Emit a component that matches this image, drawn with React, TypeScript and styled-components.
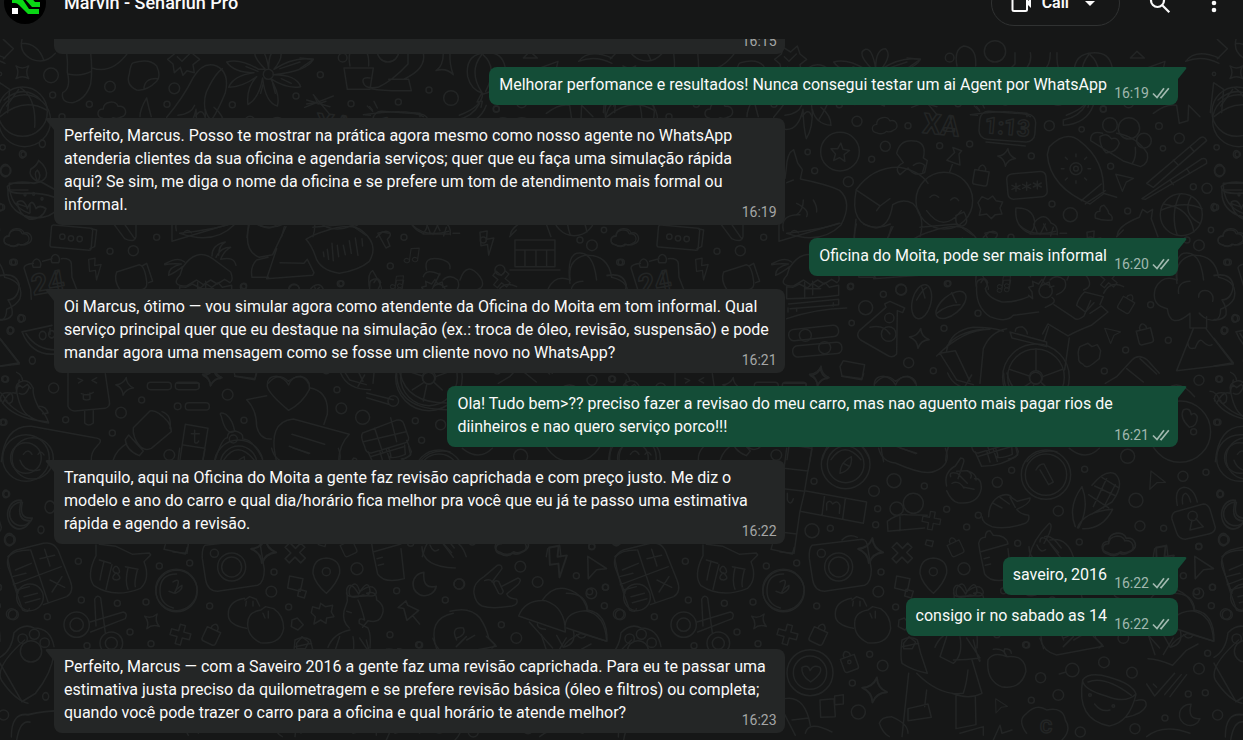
import React from "react";
import styled, { createGlobalStyle } from "styled-components";

const GlobalStyle = createGlobalStyle`
  * { box-sizing: border-box; }
  body {
    margin: 0;
    background: #161717;
    color: #fafafa;
    font-family: Roboto, "Liberation Sans", sans-serif;
  }
`;

const Page = styled.div`
  position: relative;
  display: flex;
  flex-direction: column;
  height: 100vh;
  overflow: hidden;
  isolation: isolate;
`;

const Wallpaper = styled.svg`
  position: absolute;
  inset: 0;
  z-index: -1;
  width: 100%;
  height: 100%;
  fill: none;
  stroke: #232525;
  stroke-width: 4.5;
  stroke-linecap: round;
  stroke-linejoin: round;

  text {
    font-family: Roboto, "Liberation Sans", sans-serif;
    font-weight: 700;
  }
`;

const HeaderClip = styled.header`
  display: flex;
  flex: none;
  align-items: flex-end;
  height: 39px;
  overflow: hidden;
  background: #161717;
`;

const HeaderBar = styled.div`
  display: flex;
  flex: 1;
  align-items: center;
  height: 72px;
  padding: 0 6px 0 4px;
`;

const Avatar = styled.svg`
  width: 42px;
  height: 42px;
  border-radius: 50%;
  background: #000;
`;

const Title = styled.h1`
  flex: 1;
  margin: 0 0 0 18px;
  font-size: 18px;
  line-height: 24px;
  font-weight: 500;
`;

const CallButton = styled.button`
  display: flex;
  align-items: center;
  height: 46px;
  margin-right: 17px;
  padding: 0 20px 0 18px;
  border: 1px solid #303232;
  border-radius: 23px;
  background: transparent;
  color: #fafafa;
  font: 600 16px/24px Roboto, "Liberation Sans", sans-serif;

  svg:last-child { margin-left: 12px; }
  svg:first-child { margin-right: 8px; }
`;

const IconButton = styled.button`
  display: flex;
  align-items: center;
  justify-content: center;
  width: 46px;
  height: 46px;
  padding: 0;
  border: 0;
  border-radius: 50%;
  background: transparent;
  color: #fafafa;

  & + & { margin-left: 8px; }
`;

const Conversation = styled.main`
  display: flex;
  flex: 1;
  flex-direction: column;
  justify-content: flex-end;
  min-height: 0;
  overflow: hidden;
  padding: 0 65px 7px 54px;
`;

const Bubble = styled.article<{ $out?: boolean; $tail?: boolean; $joined?: boolean; $wide?: boolean }>`
  position: relative;
  flex: none;
  align-self: ${(p) => (p.$out ? "flex-end" : "flex-start")};
  width: ${(p) => (p.$wide ? "65%" : "auto")};
  min-height: 38px;
  max-width: 65%;
  margin-top: ${(p) => (p.$joined ? 3 : 13)}px;
  padding: 6px ${(p) => (p.$out ? 10 : 14)}px 9px 10px;
  border-radius: 8px;
  border-top-left-radius: ${(p) => (p.$tail && !p.$out ? 0 : 8)}px;
  border-top-right-radius: ${(p) => (p.$tail && p.$out ? 0 : 8)}px;
  background: ${(p) => (p.$out ? "#144d37" : "#242626")};
`;

const Tail = styled.svg<{ $out?: boolean }>`
  position: absolute;
  top: 0;
  ${(p) => (p.$out ? "left: 100%;" : "right: 100%; transform: scaleX(-1);")}
  width: 9px;
  height: 12px;
  fill: ${(p) => (p.$out ? "#144d37" : "#242626")};
`;

const Text = styled.p`
  margin: 0;
  font-size: 16px;
  line-height: 23px;
`;

const StampSpace = styled.span<{ $out?: boolean }>`
  display: inline-block;
  width: ${(p) => (p.$out ? 61 : 40)}px;
`;

const Stamp = styled.footer<{ $out?: boolean }>`
  position: absolute;
  right: 8px;
  bottom: ${(p) => (p.$out ? 4 : 5)}px;
  display: flex;
  align-items: center;
  gap: 3px;
  color: ${(p) => (p.$out ? "#a1b8af" : "#a5a6a6")};
  font-size: 14px;
  line-height: 16px;
`;

type Message = { text?: string; time: string; out?: boolean; joined?: boolean; tail?: boolean };

const messages: Message[] = [
  { time: "16:15" },
  { out: true, tail: true, time: "16:19", text: "Melhorar perfomance e resultados! Nunca consegui testar um ai Agent por WhatsApp" },
  { tail: true, time: "16:19", text: "Perfeito, Marcus. Posso te mostrar na prática agora mesmo como nosso agente no WhatsApp atenderia clientes da sua oficina e agendaria serviços; quer que eu faça uma simulação rápida aqui? Se sim, me diga o nome da oficina e se prefere um tom de atendimento mais formal ou informal." },
  { out: true, tail: true, time: "16:20", text: "Oficina do Moita, pode ser mais informal" },
  { tail: true, time: "16:21", text: "Oi Marcus, ótimo — vou simular agora como atendente da Oficina do Moita em tom informal. Qual serviço principal quer que eu destaque na simulação (ex.: troca de óleo, revisão, suspensão) e pode mandar agora uma mensagem como se fosse um cliente novo no WhatsApp?" },
  { out: true, tail: true, time: "16:21", text: "Ola! Tudo bem>?? preciso fazer a revisao do meu carro, mas nao aguento mais pagar rios de diinheiros e nao quero serviço porco!!!" },
  { tail: true, time: "16:22", text: "Tranquilo, aqui na Oficina do Moita a gente faz revisão caprichada e com preço justo. Me diz o modelo e ano do carro e qual dia/horário fica melhor pra você que eu já te passo uma estimativa rápida e agendo a revisão." },
  { out: true, tail: true, time: "16:22", text: "saveiro, 2016" },
  { out: true, joined: true, time: "16:22", text: "consigo ir no sabado as 14" },
  { tail: true, time: "16:23", text: "Perfeito, Marcus — com a Saveiro 2016 a gente faz uma revisão caprichada. Para eu te passar uma estimativa justa preciso da quilometragem e se prefere revisão básica (óleo e filtros) ou completa; quando você pode trazer o carro para a oficina e qual horário te atende melhor?" },
];

const Ticks = () => (
  <svg width="18" height="14" viewBox="0 0 18 14" fill="none" stroke="currentColor" strokeWidth="1.7" aria-label="Delivered">
    <path d="M1 7.5l4 4L12 2.2M8.3 10.8l.9.8L16.8 2.2" />
  </svg>
);

/* ---- wallpaper doodles ---- */

type Dot = [number, number, number];

const Dots = ({ at }: { at: Dot[] }) => (
  <>
    {at.map(([x, y, r]) => (
      <circle key={`${x}-${y}-${r}`} cx={x} cy={y} r={r} />
    ))}
  </>
);

const Shapes = ({ at }: { at: string[] }) => (
  <>
    {at.map((d) => (
      <path key={d} d={d} />
    ))}
  </>
);

const Placed = ({ shape, at }: { shape: string; at: [number, number, number, number][] }) => (
  <>
    {at.map(([x, y, turn, size]) => (
      <path key={`${x}-${y}`} d={shape} transform={`translate(${x} ${y}) rotate(${turn}) scale(${size})`} />
    ))}
  </>
);

const SPARKLE = "M0-27Q5-5 27 0Q5 5 0 27Q-5 5-27 0Q-5-5 0-27z";
const STAR = "M0-28l8 18 20 2-15 14 4 20-17-10-17 10 4-20-15-14 20-2z";
const CLOUD = "M-32 20c-20-4-18-28 2-28 0-24 38-28 44-8 24-4 32 26 10 32-10 6-20 4-24 2-8 8-22 8-32 2z";
const ARROW = "M-26-24l56 24-26 8-18 28z";
const CROSS = "M-8-30h16v20h22v18h-22v22h-16v-22h-22v-18h22z";
const BAG = "M-22-12h44v36q0 8-8 8h-28q-8 0-8-8zM-10-12v-8q10-18 20 0v8";
const BOLT = "M-14-36h22l-6 24h22l-24 48 2-32h-20z";
const NOTE = "M-12 22v-48l30-6v46M-12 22a10 8 0 1 1-4-8M18 14a10 8 0 1 1-4-8";
const MOON = "M-4-30a32 32 0 1 0 34 38q-38 10-34-38z";
const PIN = "M-16-34h28l-4 12 14 30h-42l14-30zM0 8v30";

const Tile = () => (
  <g id="doodles">
    <g transform="scale(.3333)">
      <Dots at={[[153, 226, 22], [158, 285, 9], [268, 313, 9], [330, 260, 16], [523, 265, 16], [501, 313, 9], [697, 314, 9], [888, 288, 9], [805, 223, 15], [186, 350, 9], [0, 222, 5]]} />
      <Placed shape={SPARKLE} at={[[67, 217, 45, 1], [0, 0, 0, 1]]} />
      <Placed shape={CLOUD} at={[[340, 335, 0, 1]]} />
      <Shapes
        at={[
          "M10 118l30 28-30 30M66 118q-10 40 30 60 40 16 70-18M66 130q48 0 66 52M200 158q4 30 2 58 12 50-14 62-6 30 30 30 40-10 54-56 6-40 0-94M204 222q40 8 70-8M276 204q60 20 108-46",
          "M400 188q50-14 70 10 14 30 0 46-30 30-60 26-34-16-22-48 4-32 12-34zM432 268q0-34 40-32",
          "M503 178l20-16 6-20 22 14 20-18 8 24 20 16-20 16 4 24-22-6-12 14-8-24-18 16-4-26zM532 170l14 14 22-22",
          "M500 352q50-60 80-120 30-50 70-34 40 20 26 80-20 50-40 80M615 330q-6-40 12-70 20-40 40-54M585 350q20-30 30 0",
          "M420 350q0-22 20-56 6 30 14 56",
          "M796 208q-50-50-20-60 20-4 30 58 0-60 30-60 20 20-14 62 60-40 118-30-20 36-120 46 70 0 82 36-40 8-90-24 30 50 20 82-36-10-44-84-10 60-44 80-6-50 26-84-40 30-84 32 14-36 76-44-60 0-82-32 40-12 96 22zM840 206l60-20M844 236l30 14M818 250l8 30M790 250l-8 30M774 214l-36-14",
          "M944 290l10 22 24-8M920 300l70 20",
        ]}
      />
      <circle cx="68" cy="335" r="74" />
      <path d="M12 300q60-50 110 0M0 350q70-60 140-20M60 262q50 30 44 120M20 318l36-50" />
    </g>

    <g transform="translate(300 36) scale(.3333)">
      <Dots at={[[61, 116, 9], [153, 203, 9], [295, 198, 9], [387, 162, 9], [453, 186, 22], [589, 218, 9], [665, 200, 15], [128, 65, 13], [264, 46, 32]]} />
      <Shapes
        at={[
          "M0 66l40 4-40 28M132 96h88l-10 64h-68zM150 90q-10-50 20-60 40 4 36 60M210 126q-26-4-20 14 6 20 44 14 44-20 90-70V50M214 158q40 8 120 6l-8-34h-60M370 50q10 50-60 80",
          "M430 50q0 40-22 54 30-10 52 12-12-30-10-66",
          "M545 52q-50 10-42 70 10 40 45 50 0 40-70 66M545 52q60-10 70 40 10 60-64 82M545 56q-40 50 0 112M549 56q46 40 8 110M545 172l-14 26 16-2-4 18",
          "M14 214l86-34M40 176l50 60M20 204l34-6M190 236q140-20 180 6M202 210l16 16M222 196l10 20M670 66l20-20 22 20z",
          "M720 96l54-20-14 60zM740 200q20-60 60-90M836 76q30-40 100-10M836 76q50-20 100 6",
          "M910 230l10-90 30 20-6 70",
        ]}
      />
    </g>

    <g transform="translate(173 100) scale(.3333)">
      <Dots
        at={[
          [231, 64, 15], [384, 77, 9], [316, 139, 15], [275, 178, 9], [83, 156, 8], [104, 212, 9], [205, 245, 15], [180, 155, 58],
          [808, 77, 15], [905, 88, 8], [970, 28, 9], [1137, 78, 10], [1198, 115, 15], [1149, 145, 8], [1310, 142, 8], [1373, 163, 8],
          [1320, 212, 15], [1240, 260, 9], [1281, 265, 15], [1307, 322, 9], [1293, 390, 8], [754, 168, 9], [569, 132, 9], [479, 137, 9],
          [816, 312, 9], [871, 344, 21], [1043, 333, 9], [992, 199, 9], [990, 75, 22], [1047, 85, 32], [1092, 122, 22], [493, 302, 85],
          [1204, 344, 63], [213, 558, 8], [310, 583, 9], [364, 570, 16], [257, 623, 21], [215, 669, 8], [76, 706, 18], [134, 743, 18],
          [505, 550, 8], [594, 640, 9], [492, 685, 9], [386, 788, 15], [460, 812, 9], [1257, 436, 16], [1345, 487, 9], [1112, 614, 9],
          [1165, 721, 9], [1335, 691, 9], [1368, 655, 10], [1037, 750, 9], [973, 813, 9], [1257, 841, 15], [1319, 838, 9],
          [768, 832, 100], [768, 832, 85], [768, 832, 20], [797, 573, 20], [326, 702, 22], [328, 654, 14], [888, 206, 18], [888, 206, 7],
          [1376, 62, 78],
        ]}
      />
      <Placed shape={STAR} at={[[180, 157, 5, 1]]} />
      <Placed shape={SPARKLE} at={[[680, 172, 8, 1], [418, 715, 8, 1.1], [118, 828, 10, 1.1]]} />
      <Placed shape={CLOUD} at={[[318, 78, -5, 0.9], [1360, 415, 0, 1]]} />
      <Placed shape={BAG} at={[[604, 224, 10, 1], [1042, 608, 30, 0.9], [1093, 700, -14, 1]]} />
      <Placed shape={ARROW} at={[[1034, 240, -10, 0.9], [998, 700, -10, 0.8]]} />
      <Placed shape={PIN} at={[[522, 180, 20, 1]]} />
      <Placed shape={NOTE} at={[[676, 548, 8, 0.7]]} />
      <Placed shape={CROSS} at={[[985, 538, 40, 0.9]]} />
      <text x="612" y="98" fontSize="68" transform="rotate(5 612 98)">1:13</text>
      <text x="426" y="98" fontSize="84" transform="rotate(6 426 98)">XA</text>
      <rect x="598" y="38" width="168" height="84" rx="26" transform="rotate(4 682 80)" />
      <rect x="682" y="218" width="118" height="76" rx="16" transform="rotate(-5 740 256)" />
      <rect x="26" y="682" width="150" height="34" rx="15" transform="rotate(-6 100 700)" />
      <rect x="38" y="732" width="148" height="34" rx="15" transform="rotate(-5 112 750)" />
      <ellipse cx="425" cy="605" rx="28" ry="52" transform="rotate(14 425 605)" />
      <ellipse cx="513" cy="615" rx="28" ry="54" transform="rotate(50 513 615)" />
      <Shapes
        at={[
          "M708 250v24M696 256l24 12M696 268l24-12M740 247v24M728 253l24 12M728 265l24-12M772 243v24M760 249l24 12M760 261l24-12",
          "M618 126l118 12M715 38l26 2v10M590 20l8 10M576 44l16 2",
          "M15 88q40 4 54-60 2 60 10 88 20-30 18-88 10 44 56 48 0-30-30-54M15 46q40-4 50-30",
          "M15 235l4-30q2-46 22-56l12 40 14 20-6 28q80 16 118 34 40 36 4 104-60 60-160 26M40 240l-20 8M20 400q100-10 160-30M50 310q40 20 30 40M100 300q12 20 10 36M10 392q-10-50 50-48M70 300q0 30-20 44",
          "M350 160q10-46 60-36 30 8 20 50l12 8-8 36q-30 14-50-14l-24 20q-20-20 10-36zM400 196q20-14 34 0l-6 20",
          "M228 270q50-70 130-68 60 10 86 48M228 270l72 48 30-22M228 274q-20 100 60 110 40-4 50-70 30-20 60-4 40 40 22 100M300 318l-10 14M222 412l6-54M326 410l8-30M420 382l110-10 50 34",
          "M450 292q12-14 26 0M512 300q14-14 24 2M440 332q50 70 104 0M528 346q-4 36 20 32 22-8 4-42z",
          "M606 290l18 8 14-10 10 14 20 4-8 18 6 18-20 2-12 12-14-14-22 4 4-18-8-20z",
          "M708 324q50-2 56 40 0 24-14 36-48-20-42-76zM764 366q30-34 50 4 20 4 18 34M780 404l16-32M812 408l8-26M750 402h80",
          "M808 140q50-50 90-18 80 60 72 160l-40 30q-120-50-128-148zM904 302l60-50M916 312l60-40M970 280l40 12M888 170v-8M888 250v-8M852 206h-8M932 206h-8M862 178l-6-6M914 178l6-6M862 234l-6 6M914 234l6 6",
          "M850 60q50-10 70-50M850 76q70-4 90-60M850 60v16",
          "M960 110q20-14 34 6 20-6 24 14-10 30-40 28-20-20-18-48zM932 120q0-30 36-20M932 122l100 62M1010 100q60 10 92 60 6 30-20 40l-50-16M1066 142q4 30-10 50",
          "M1120 40q40-30 70-24l8 54 26-8 2-46 34 34",
          "M1100 250l160-136q14-8 20 8l-160 140zM1086 296l180-120q16-4 14 14L1096 298zM1180 180l14 14M1230 140l12 14M1170 240l10 14M1220 206l10 14",
          "M1144 330q70-30 122-4M1200 282q-30 60-8 124M1150 312q80 10 92 84M1234 290q-30 50 26 80",
          "M1330 250h60M1330 250q0 70 60 90M1350 310l30 10M1326 270h60",
          "M946 354q-4-20 14-20-2-16 12-18 14 16 14 24 14 8 10 20-26 4-50-6z",
          "M1012 408q0-30 66-56l10-24 14 10 16-10-4 28 20 54M1030 390l-20 20",
          "M20 560v36q80 0 156-10v-30l-28 6-12-14-20 14-18-12-16 14-24-12-20 10zM74 546v44M98 544v40M76 566h46M26 612l150-14v16l-146 12M24 636v-12M50 634v-10M160 618v-10M20 656q90-30 180-32",
          "M330 604l44 20-6 14-16-6-2 130q-10 12-24 6l-84-48q-16-12-4-28l80-70-4-10zM270 682q40-10 60 20",
          "M410 600q16-30 30-38M425 560l10 34M470 640q30-26 70-26M515 578l14 30",
          "M590 560q-4 60 40 90 50 20 70-4l76-10M590 560q-4-24 24-24 16 10 2 30 4 26 50 40 40 2 80-16M746 586l12 10-2-20-10-14 14-4-2-14 18 8 10-14 8 14 14-6 2 16 12-4M816 592q14 10 0 20l-20 10M810 540q20-20 44 0 12 30-24 44M822 614l60 40q10 10 30-6l20-46",
          "M914 576l56 14-10 24M914 576q-20 20-24 40l26 20 26-28M930 640l34-22 20 18-50 40q-50 20-70 32l-60-36-16 30",
          "M500 752q10-60 80-70 60 0 90 12M470 768q80-80 160-80M480 760l50 80 50 14M480 760l46-8 44 92M600 850l10-104q20-50 70-60M690 696l110 30v14l-104-26zM706 694q0-14 20-14 16 10 16 22M868 714l-14 96M806 680l-14 44M500 740q30-44 110-52",
          "M768 812v-66M788 830l60-22M784 848l24 22M752 848l-34 22M748 828l-60-20",
          "M900 740l24-10 12 10 16-6 10 18-4 24-20 16q-20 16-30 0-14-6-12-20-4-18 4-32z",
          "M1010 830l46-50q20-20 46 0l36 40M1040 806l50 40M1080 776l50 46M976 850l34-20",
          "M1230 640q-60 50-68-14-50-10-36-60 20-44 66-26-10-60 44-74 70-4 80 66 60 14 46 64-10 20-40 32 0 50-50 24-20-16-12-12M1230 640v44h50v-34M1196 580q-6-34 34-36M1256 592q0-24 26-20 22 10 16 32M1240 686l-50 126 170-20-82-106M1224 730q0 20 22 14 12-34 24-18 18 16 26 8",
          "M180 800l10-18 64 12-8 42-60-8zM286 850q30-36 60-6 40-30 60 6M12 850h66v10",
          "M840 400h20M610 412l18-16 20 4",
        ]}
      />
    </g>

    <g transform="translate(0 220) scale(.3333)">
      <Dots at={[[38, 127, 9], [330, 94, 9], [400, 92, 15], [470, 52, 9], [1212, 52, 9], [1171, 138, 9], [1021, 191, 9], [187, 50, 8], [213, 55, 8], [239, 57, 8], [730, 200, 9], [882, 208, 16], [1450, 60, 9], [1500, 150, 15], [1740, 60, 9]]} />
      <Placed shape={CLOUD} at={[[54, 56, 0, 0.9]]} />
      <Placed shape={BOLT} at={[[284, 148, -10, 0.9], [1460, 70, -10, 1]]} />
      <Placed shape={NOTE} at={[[1240, 108, 8, 0.8], [1195, 200, 10, 0.7]]} />
      <rect x="152" y="20" width="124" height="66" rx="6" transform="rotate(5 214 53)" />
      <text x="100" y="226" fontSize="86" transform="rotate(-10 100 226)">24</text>
      <Shapes
        at={[
          "M274 26l16 4-6 50-14 6M340 10l34 46q30 14 34-6V10M372 10l32 46",
          "M72 144q0-10 28-14M128 124l28-8M184 116q30-2 30 16l2 40 14 36M72 144l20 64 2 30M100 142a12 16 0 1 1 20 0zM156 128a12 16 0 1 1 20 0z",
          "M350 156l68-22q16 2 22 50 4 24-20 26h-60q-20-30-10-54zM426 138l14-8 18 54-12 4",
          "M516 10v54l180-54M550 40q10-16 24-2",
          "M548 142q40-60 90-26l54 40q10 26-2 32l-16-10-22 14-20-12-22 14-20-14-30 18q-50 0-20-32zM494 132q40-24 60-6M494 134q20-4 50-2-40 10-38 34 16-6 42-26M636 108q0-34 40-42-20 10-20 40M648 112q14-30 44-30-20 10-30 36 40-10 46 18",
          "M748 12q-20 80 30 100l40-8 40-84M840 128l72 2 10-12 20 40-4 8-138 10 30-90M804 112l-34 8q-20 20-14 52h50M770 12q40 20 80 0",
          "M946 108q-10-30-28-50 20-14 60-26 80-26 110 2 50 40 20 90-30 26-90 36-60-10-72-52zM970 96l2 14M982 88l4 30M996 70l4 52M1012 76l4 34M1030 76l6 28M1048 62l6 38M1066 54l8 52M1086 56l2 22",
          "M1134 40l24 44 12-6-8-20q20-20-4-24z",
          "M1108 200q-6-40 10-48 30 50 26 56M1122 188q10-20 20 0",
          "M1280 150q-10-40 34-34 40 6 36 30M1270 170q10-26 50-6M1300 200l20-40",
          "M1236 14q40 40 110 20M1280 12l10 24M1310 12l10 20",
          "M1545 60h120v80h-120zM1545 90h120M1575 90v48M1608 90v48M1640 90v48M1530 150h150M1710 190q-10-80 20-90 50-10 60 80",
          "M1380 180q20-60 60-10 20 30-10 40M1490 220q20-40 60-20",
        ]}
      />
    </g>

    <g transform="translate(0 365) scale(.3333)">
      <Dots at={[[14, 42, 9], [161, 69, 15], [197, 164, 9], [337, 204, 9], [425, 105, 9], [363, 143, 16], [533, 124, 10], [683, 89, 16], [732, 166, 9], [508, 270, 16], [1011, 74, 9], [1024, 130, 16], [1088, 157, 21], [1246, 167, 9], [1322, 179, 15], [1265, 226, 9], [700, 222, 12], [1286, 40, 18], [1180, 108, 16], [8, 172, 9], [98, 280, 62], [1480, 90, 15], [1560, 160, 9], [1700, 80, 15], [1760, 200, 9]]} />
      <Placed shape={SPARKLE} at={[[374, 64, 10, 1], [636, 36, 10, 1]]} />
      <rect x="442" y="52" width="72" height="22" rx="10" />
      <rect x="526" y="52" width="72" height="22" rx="10" />
      <rect x="556" y="113" width="72" height="22" rx="10" />
      <Shapes
        at={[
          "M50 22q16 6 18 26-20 6-20 20 10 70 40 86 24 16 58 20-10-30-30-46-20-40-16-58-12-26-32-22M50 70l8-10 10 8 14-10 10 12M2 108q-4-30 30-24 10 8 4 26-14 12-16-4M0 100q30 60 140 70M118 124q20 0 26 20l-16 2",
          "M204 24v100q6 14 20 14l92-8q16-6 12-22l-12-82M234 40l14 6-12 8M290 38l-14 8 14 8M244 86q18 8 36-4M250 88v14q10 6 20 0V84M254 138v36q12 12 26 0v-40",
          "M704 34l60 10 6-18",
          "M866 136q-60-50-64-72-2-30 28-30 24 4 36 26 10-26 36-26 30 6 26 40-20 40-62 62zM800 92l-60 12q30 30 30 80 10 40 44 38M928 68q60 10 54 80l-10 30M830 290q-30-120 50-128l168 46q-30 30-32 80M876 208l98 30M868 244l58 22",
          "M400 188l50-50q20-6 54 32 10 16 10 30l-60 50q-30 14-50-32-6-16-4-30zM486 140q30 10 24 50M376 224l10-14 44 48-12 14q-40-16-42-48zM340 284q10-30 40-48",
          "M540 284l16-106 68 12-16 100M550 240l64 10M584 196v36q8 6 12-4M574 206h24",
          "M664 154q-10-16 14-6 20 16 26 50-26 16-40-44zM646 284q20-66 36-66 0-20 24-20 26 6 22 24 30 0 60 60M672 284q40-60 90 0",
          "M4 290q10-110 90-106l190 34q30 4 8 24-20 20-18 44M70 268q14-20 26 0M114 268q10-14 18 2M60 286q14 40 60 28",
          "M1088 204l100-38q20-4 24 12l14 40q0 12-12 16l-100 30q-16 2-20-20-14-30-6-40zM1124 190l24 72M1090 230l128-30M1172 158l18 72M1166 250q14 40 0 24 10 10 50-6l-2-28M1220 226l14 34q-2 20-30 22",
          "M1100 84l80 20M1100 98l66 20M1022 24q20 50 90 50M1094 30l-20 34M1190 24q0 110 150 110M1200 24q20 90 140 90M1270 108l10-48",
          "M1260 290q30-40 90-30M1400 180q60-70 120-20l-20 60-80 20zM1620 120l60 30-20 60-60-20z",
        ]}
      />
    </g>

    <g transform="translate(173 380) scale(.3333)">
      <Dots
        at={[
          [197, 253, 73], [197, 253, 55], [102, 304, 9], [282, 333, 16], [342, 302, 21], [433, 318, 9], [293, 386, 9], [287, 434, 9],
          [96, 452, 21], [151, 445, 9], [350, 386, 20], [400, 370, 30], [500, 388, 9], [595, 406, 9], [560, 441, 9], [652, 307, 15],
          [695, 271, 9], [798, 284, 74], [798, 284, 62], [914, 268, 9], [1043, 229, 21], [835, 393, 15], [1068, 361, 21], [1080, 438, 15],
          [1151, 445, 9], [1209, 289, 15], [1278, 277, 9], [1322, 342, 9], [1314, 127, 9], [1333, 479, 15], [1257, 499, 9], [713, 490, 9],
          [898, 486, 9], [176, 561, 42], [176, 561, 30], [124, 520, 12], [460, 575, 12], [303, 576, 9], [295, 635, 16], [552, 566, 18],
          [50, 549, 9], [110, 678, 9], [347, 681, 9], [90, 878, 69], [90, 878, 50], [269, 823, 9], [308, 857, 16], [217, 909, 9],
          [235, 996, 21], [740, 795, 9], [782, 893, 15], [835, 945, 16], [754, 961, 9], [877, 870, 20], [972, 847, 16], [1056, 878, 16],
          [1257, 866, 16], [1283, 820, 9], [1225, 942, 9], [1276, 938, 9], [1313, 1005, 15], [1155, 1014, 9], [901, 1056, 15],
          [1065, 1046, 15], [1250, 635, 9], [1298, 622, 9], [1342, 704, 15], [1200, 155, 92], [1380, 234, 70], [1380, 234, 46], [10, 630, 62],
          [208, 846, 5], [930, 945, 4], [1000, 978, 4], [1238, 408, 14],
        ]}
      />
      <Placed shape={SPARKLE} at={[[272, 512, 8, 1.4], [284, 930, 10, 1.4]]} />
      <Placed shape={CROSS} at={[[366, 519, 45, 1.1], [454, 422, 10, 0.9], [22, 764, 15, 1]]} />
      <Placed shape={BAG} at={[[524, 498, -25, 0.9], [118, 760, 25, 1], [206, 842, -20, 1]]} />
      <Placed shape={CLOUD} at={[[1022, 494, 0, 1.2]]} />
      <Placed shape={ARROW} at={[[1130, 300, 15, 0.9], [1268, 560, 10, 1.1], [662, 976, 10, 0.7]]} />
      <Placed shape={MOON} at={[[1368, 400, 10, 1.1], [1232, 1003, 10, 1]]} />
      <Shapes
        at={[
          "M180 280q0-34 34-50 4 40-34 50zM190 250l16 8",
          "M20 205l-8 60 72 8 12-66M84 270l-10 62 186 34-10 64-190-36 14-60M10 326l64 8M134 344l-8 62M196 356l-8 62M60 392l-18 128-42-4M0 456l50 6M140 390v-20q10-14 18 2 14-14 22 4l-2 24M22 340v20q10 20 18-4",
          "M296 205q10 40 50 44 90 40 120 24 50-20 30-68M360 204l50 16",
          "M500 318q-10-40 26-60l16-24q14 0 8 16l-16 46M512 290q-6-16 20-10l30 30M530 274l30-2q20 10 12 22M562 272q30 10 26 28M584 296q20-4 20 30-10 50-70 42-20-4-34-36M516 310q20-10 36 14M552 322l30 6",
          "M585 215l20 44q60 0 108-34l-6-26M592 230l100-30M620 212l10 34M640 208l12 36M868 205q50 40 90 0",
          "M768 270q10-20 24-18l28 54-14 8-26-44",
          "M626 410q0-40 30-60 30-14 40 4l16 10 38-10q4 16-40 34 10 14 36 18 4 16-10 24-60 20-100 10-30-12-30-30M640 370l26 14M660 352l28 20M690 352l16 30",
          "M886 440q-24-60 20-120 24 60-10 124M892 444q20-50 106-56-30 60-90 58M936 316q40-50 70-34 30 30-10 84l-60 36M926 344l60 40M944 318l64 30M966 292l48 30M940 380l40-84M970 384l36-70",
          "M1192 376q-10-50 20-54 30 2 40 44M1208 372q-4-30 10-32 10 6 14 26M1184 396l86-24q14 0 20 16l16 54q0 16-20 20l-70 16q-20-2-26-20l-14-40q-2-14 8-22zM1236 420l-6 30 40-10-22-24",
          "M322 424q30-24 60-20l60 2M324 454l-2-30M324 454l110-10M360 410v42",
          "M596 490q4-18 20-18 0-20 14-20l10 14q40 0 44 26l-84 24zM600 516l14 66q20 30 80 14l-10-90M612 536l16-4M616 556l16-4",
          "M748 530q10-50 60-100 16 6-16 60M780 486q0-20 20-8l36 40M794 470q20-8 50 34M810 480q50-10 70 50",
          "M96 496l150-18q16 0 18 30l10 60q0 40-20 48l-120 18q-30 0-36-34l-10-64q-2-30 8-40zM186 480q20-20 46-8",
          "M420 580q0-44 40-46 44 4 40 46-10 34-40 60-34-30-40-60z",
          "M350 588l40 8-8 38-38-10zM378 628l22 6-6 20-20-6z M440 480l20 4-4 16-20-6z",
          "M530 625q20-30 30 10 40-30 50 0 0 20-40 10-50 20-40-20",
          "M0 606q30-20 4 34l-16-6",
          "M214 655q-50 10-48 50 0 30 54 40M216 660l14-10 20 8 10 20M224 730q0-34 40-40l14-10 24 6q30 20 30 60-10 50-70 42-40-20-38-58M270 700l6 14M286 694v20M220 664l-2 14M240 664v14",
          "M66 862q20-10 24 10 10-20 30-10 10 16-28 44-30-20-26-44z",
          "M120 960l42-4 4 54-44 2zM164 948l26-4v28l-26 2z",
          "M15 956q60-10 76 80M0 976l46 90M36 1020l50-6M76 1060q10-40 80-4",
          "M366 780q-6 50 0 70 30 20 76 30l-20-60-10-40q-20-14-46 0M366 800l50-10M500 770l-20 60 40 20q30-24 20-80M580 780q20 80 20 60M520 840q40 0 80-6l-40-60M410 880q70 70 140 60 10-30 14-70M576 840l30 100q-40 20-90 0M386 880l-20 190M440 930l-6 50M384 986l60-14 10 40-70 10zM384 1060q0-30-50-50-30 0-36 20 10 30 30 40M528 946v100l60-12-2-84M540 1060l70-20v26",
          "M680 830q-40-16-56 10-6 60 40 80 60 10 74-46-2-50-58-44zM680 830q-10-12-6-24 20 0 20 14M640 808q30-4 40 20",
          "M780 775q10 40 50 50l140-26-30-30M850 800l30-30M838 882l20-6",
          "M1105 764l20 60M1104 836q30 0 74 20l40-44 36-20M1150 824l30-50M1180 640q60 0 64 50 60 10 58 94l-80-24q-40 20-50 40",
          "M908 900q-20 120 80 138 60-10 80-94M908 900q20-26 80-8 70 20 80 50-30 30-90 6-70-20-70-48M924 906q50-20 130 40M1068 962q34-10 30 16-10 24-60 34M944 972q20 26 46 18",
          "M1100 912l24 36 60-68M1120 912l10 10M1154 944l50-60M1170 950l50-66",
          "M1144 50q40-70 100 0M1210 90q20-10 24 14 10-10 18 6 0 30-24 32-30-30-18-52",
          "M1290 34q20 0 30 30 40 40 70 44M1310 70q20-40 40-30l10-40M1360 40q20 10 30-20",
          "M1120 530l4-24 36-10 4 34M1326 530q20-20 64-20M1326 540q10 60 44 150 20 10 20-4M1340 590l40-10M1350 630l40-10",
          "M740 1060q-30-40 0-60 30-30 60-10 50-10 56 30 20 30-10 60M640 1080l20-44 6 24 30-10M1376 780q-90 80-70 120 40 60 80 70M1100 1070q50-40 130-10",
        ]}
      />
      <text x="780" y="1060" fontSize="56">C</text>
    </g>

    <g transform="translate(0 540) scale(.3333)">
      <Dots at={[[235, 64, 9], [90, 172, 40], [35, 222, 16], [142, 230, 9], [244, 180, 9], [352, 190, 9], [478, 78, 9], [438, 186, 9], [390, 276, 9], [453, 311, 9], [261, 317, 9], [230, 254, 38], [230, 254, 20], [334, 310, 34], [334, 310, 18], [530, 153, 62], [103, 283, 15], [68, 296, 14], [134, 308, 14], [93, 334, 32], [1190, 152, 9], [1336, 180, 9], [1170, 284, 9], [1256, 314, 9], [1377, 132, 15], [28, 0, 14]]} />
      <Placed shape={SPARKLE} at={[[456, 244, 35, 1]]} />
      <Placed shape={PIN} at={[[1232, 220, -40, 1.1]]} />
      <Placed shape={MOON} at={[[1276, 130, 0, 1.1]]} />
      <Shapes
        at={[
          "M50 30l80-20q30-6 44 20l36 90q14 36-10 50l-70 24M50 30q-34 14-26 50l30 80M92 30l52 156M40 134l144-54M46 90l48-20M120 56l44-10M134 28l16 50M150 120l44 22M186 110l-30 46M72 170l40-10M76 188l44-12",
          "M288 15v32q-30 60-6 90 60 40 140 8 30-30 10-80l20-20-4-6-50 4-50-24-50-6M298 60l34 10M312 64q-10 40-12 56M336 74q-10 40-18 74M376 80l38 8M384 84q-10 40 0 64M412 90q-10 40-6 50M340 86q8-14 16 0 8 16-8 14-12-6-8-14M348 98q-20 20 2 22 20-4-2-22",
          "M496 14l-4 14 64 14 6-20M526 160q-4-10 20-24 2 14-20 24M530 102q-50 0-50 50 0 40 40 52",
          "M288 258l-4-80q8-16 18-4l14 104M270 246l100-30q14 4 6 20l-104 40",
          "M0 352q36-20 42-74 30-30 60-14 50 0 60 56",
          "M1050 270q-50 10-66 52M1048 264q-22-20-16-50l10-30q0-20-2-36 10-30 36 14 30-50 34-10 0 20-34 16-40 6-36-12M1074 180q10 20 20 60-20-10-16 10l26 14q10 20 6 60M1100 160q30-10 30 20 30 20 14 50-10 20-40 12l-16 20M1040 214l14 4",
          "M938 200l20 6 4-16 14 10 22-4-4 20 8 14-22 4-2 16-16-10-20 12 4-22-12-12z",
          "M876 240l16-6 18 20-16 16-20-10zM890 310l16-20 20 16-10 20h-26z",
          "M1310 326q-30-90 50-106M1266 20q0 60 100 64M1290 15q10 26 26 14M1330 12l30 40",
        ]}
      />
    </g>

    <g transform="translate(450 540) scale(.3333)">
      <Dots at={[[28, 132, 16], [211, 80, 16], [263, 126, 16], [379, 107, 9], [424, 160, 16], [466, 142, 9], [463, 197, 9], [154, 254, 9], [199, 294, 16], [425, 20, 9]]} />
      <Placed shape={BOLT} at={[[322, 66, -8, 1.3]]} />
      <Placed shape={CLOUD} at={[[188, 20, 0, 1.1]]} />
      <Shapes
        at={[
          "M72 160q-4-30 30-50l40-34q14-4 14 10l-30 40M104 122q20-10 30 14l12 24q10 6 14-6l-14-30q-16-6-14 10M154 140l50-26q14 4 0 20l-34 28q6 14 30 16 6 16-14 20-60 10-90 0-20-10-24-38",
          "M206 228q20-50 80-46 60 20 60 94zM276 182q40-60 100-24 30 20 36 54M346 276q-10-60 60-64 60 10 64 92l-120-40M238 246l70 78M262 252q0 14 24 16M320 286l20 36q40-10 30-50M380 284q14 20 30 0",
          "M0 214q60-16 90 20 20 30 26 60l20 20-10 10M20 300q-20-40 20-36 10 20-20 30M50 300l24-14",
        ]}
      />
    </g>

    <g transform="translate(0 100) scale(.3333 .4082)">
      <Dots at={[[67, 133, 9], [127, 107, 9], [16, 173, 15], [0, 263, 9], [62, 535, 9], [30, 565, 9], [97, 638, 9], [155, 574, 9], [128, 577, 10], [123, 1053, 9], [28, 1077, 15], [150, 997, 15], [17, 965, 9], [137, 1461, 9], [75, 232, 3], [101, 230, 3], [126, 242, 3]]} />
      <Placed shape={MOON} at={[[60, 1014, 15, 1.1]]} />
      <Shapes
        at={[
          "M112 200q-28-14-20-30 20-10 24-22 30 20 22 40-10 14-26 12zM112 198q-12-20 0-26 12 10 4 24",
          "M22 212q20-16 80-8l20-4 44 20M22 212q0 20 60 16 50 0 80 10M24 220q-4 50 60 66 60 10 90-20M52 250q20-10 30 16 14-30 26 0 10-10 30 0-10 26-50 26-34-14-36-42M90 256v20",
          "M0 430q50-8 58 24-4 34-34 36 16 20 12 36-10 14-36 12M0 584l58 60-58 8",
          "M66 568l90-16M66 568q30 60 100 54M78 572q30 40 90 40M150 560v14",
          "M0 1380l66 94 40-20q50-50 56-100M34 1560q0-60 50-54 50-10 110-10M50 1568q10-50 40-44",
        ]}
      />
    </g>
  </g>
);

const ChatWallpaper = () => (
  <Wallpaper aria-hidden="true">
    <defs>
      <Tile />
    </defs>
    {[-1, 0, 1, 2, 3].map((n) => (
      <use key={n} href="#doodles" x={n * 607} />
    ))}
  </Wallpaper>
);

export default function App() {
  return (
    <>
      <GlobalStyle />
      <Page>
        <ChatWallpaper />
        <HeaderClip>
          <HeaderBar>
            <Avatar viewBox="0 0 42 42" aria-label="Marvin">
              <path fill="#0ad615" d="M8 17h8q2 0 3 1l6 9h10v5H24l-9-9q-2-2-4-2H8z" />
              <path fill="#0ad615" d="M14 13h11l6 7h5v5h-8l-8-9h-6z" />
              <path fill="#fff" d="M8 26h6v6H8z" />
            </Avatar>
            <Title>Marvin - Senariun Pro</Title>
            <CallButton type="button">
              <svg width="24" height="24" viewBox="0 0 24 24" fill="none" stroke="currentColor" strokeWidth="2">
                <path d="M4 4.5h11.500q1.500 0 1.500 1.500v12.500q0 1.500-1.500 1.500H4q-1.500 0-1.500-1.500V6q0-1.500 1.500-1.500z" />
                <path d="M17 11l4-4v10l-4-4z" fill="currentColor" stroke="none" />
              </svg>
              Call
              <svg width="18" height="18" viewBox="0 0 18 18" fill="currentColor">
                <path d="M4 7h10l-5 5z" />
              </svg>
            </CallButton>
            <IconButton type="button" aria-label="Search">
              <svg width="26" height="26" viewBox="0 0 26 26" fill="none" stroke="currentColor" strokeWidth="2.200">
                <circle cx="10.500" cy="10.500" r="6.500" />
                <path d="M15.300 15.300l7 7" />
              </svg>
            </IconButton>
            <IconButton type="button" aria-label="Menu">
              <svg width="26" height="26" viewBox="0 0 26 26" fill="currentColor">
                <circle cx="13" cy="6" r="2.300" />
                <circle cx="13" cy="13" r="2.300" />
                <circle cx="13" cy="20" r="2.300" />
              </svg>
            </IconButton>
          </HeaderBar>
        </HeaderClip>
        <Conversation>
          {messages.map((m, i) => (
            <Bubble key={i} $out={m.out} $tail={m.tail} $joined={m.joined} $wide={!m.text}>
              {m.tail && (
                <Tail $out={m.out} viewBox="0 0 9 12" aria-hidden="true">
                  <path d="M0 0h7q2 0 1 2L0 12z" />
                </Tail>
              )}
              {m.text && (
                <Text>
                  {m.text}
                  <StampSpace $out={m.out} />
                </Text>
              )}
              <Stamp $out={m.out}>
                <time>{m.time}</time>
                {m.out && <Ticks />}
              </Stamp>
            </Bubble>
          ))}
        </Conversation>
      </Page>
    </>
  );
}
